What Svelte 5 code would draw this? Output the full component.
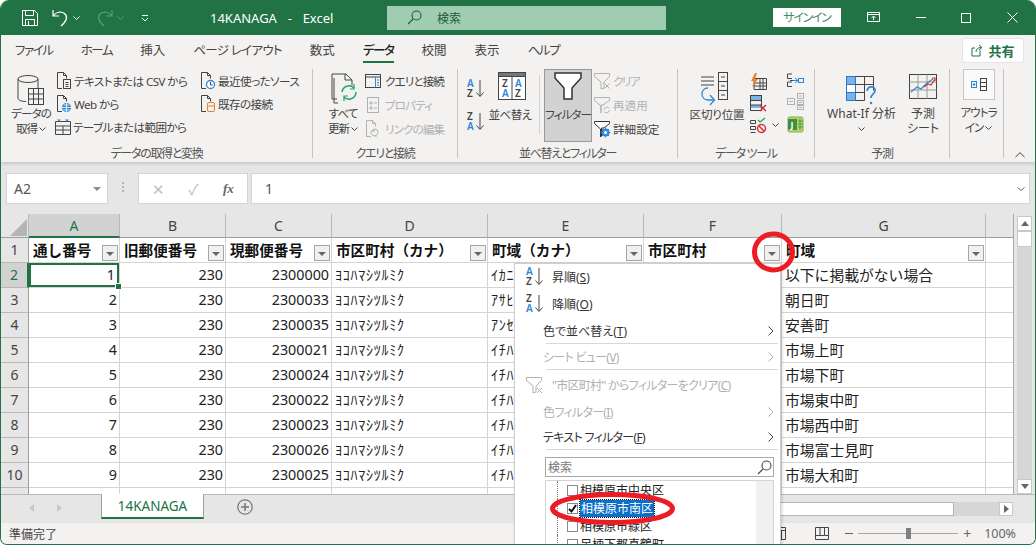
<script>
  const tabs = ['ファイル', 'ホーム', '挿入', 'ページ レイアウト', '数式', 'データ', '校閲', '表示', 'ヘルプ'];
  const cols = ['A', 'B', 'C', 'D', 'E', 'F', 'G', ''];
  const heads = ['通し番号', '旧郵便番号', '現郵便番号', '市区町村（カナ）', '町域（カナ）', '市区町村', '町域'];
  const kanji = ['挿入', '数式', '校閲', '表示'];
  const rows = [
    [2300000, 'ｲｶﾆｹｲｻｲｶﾞﾅｲﾊﾞｱｲ', '以下に掲載がない場合'],
    [2300033, 'ｱｻﾋﾁｮｳ', '朝日町'],
    [2300035, 'ｱﾝｾﾞﾝﾁｮｳ', '安善町'],
    [2300021, 'ｲﾁﾊﾞｶﾐﾁｮｳ', '市場上町'],
    [2300024, 'ｲﾁﾊﾞｼﾓﾁｮｳ', '市場下町'],
    [2300022, 'ｲﾁﾊﾞﾋｶﾞｼﾅｶﾁｮｳ', '市場東中町'],
    [2300023, 'ｲﾁﾊﾞﾆｼﾅｶﾁｮｳ', '市場西中町'],
    [2300026, 'ｲﾁﾊﾞﾌｼﾞﾐﾁｮｳ', '市場富士見町'],
    [2300025, 'ｲﾁﾊﾞﾔﾏﾄﾁｮｳ', '市場大和町']
  ];
</script>

<div class="win">
  <header class="title">
    <svg class="q1" width="16" height="16" viewBox="0 0 16 16" fill="none" stroke="#fff"><path d="M.5.500h12l3 3v12H.5zM3.500.5v5h8v-5M3.500 15.500v-6h9v6M6.500 11v4"/></svg>
    <svg class="q2" width="17" height="18" viewBox="0 0 17 18" fill="none" stroke="#fff" stroke-width="1.200"><path d="M1 1v6h6M1.500 6.500C4 3 9 2 12.500 4.500 16 7.500 15 12 9 17"/></svg>
    <svg class="chev q3" width="7" height="4" viewBox="0 0 7 4" fill="none" stroke="#fff"><path d="M.5.500l3 3 3-3"/></svg>
    <svg class="q4" width="17" height="18" viewBox="0 0 17 18" fill="none" stroke="#5a9a78" stroke-width="1.200"><path d="M16 1v6h-6M15.500 6.500C13 3 8 2 4.500 4.500 1 7.500 2 12 8 17"/></svg>
    <svg class="chev q5" width="7" height="4" viewBox="0 0 7 4" fill="none" stroke="#5a9a78"><path d="M.5.500l3 3 3-3"/></svg>
    <svg class="q6" width="8" height="8" viewBox="0 0 8 8" fill="none" stroke="#fff"><path d="M1 1.500h6M1 4l3 3 3-3"/></svg>
    <span class="doc">14KANAGA&nbsp; - &nbsp;Excel</span>
    <div class="search">
      <svg width="15" height="15" viewBox="0 0 15 15" fill="none" stroke="#1c5c38" stroke-width="1.100"><circle cx="9.500" cy="5.500" r="4.500"/><path d="M6 9l-5 5"/></svg>
      <span>検索</span>
    </div>
    <div class="signin">サインイン</div>
    <div class="winbtns">
      <svg width="13" height="11" viewBox="0 0 13 11" fill="none" stroke="#fff"><path d="M.5.500h12v9H.5zM.5 2.500h12M6.500 8V4.500M4.500 6l2-2 2 2"/></svg>
      <svg width="10" height="1" viewBox="0 0 10 1"><path d="M0 .5h10" stroke="#fff"/></svg>
      <svg width="10" height="10" viewBox="0 0 10 10" fill="none" stroke="#fff"><rect x=".5" y=".5" width="9" height="9"/></svg>
      <svg width="11" height="11" viewBox="0 0 11 11" fill="none" stroke="#fff"><path d="M.5.500l10 10M10.500.500l-10 10"/></svg>
    </div>
  </header>

  <nav class="tabs">
    {#each tabs as t}
      <span class:on={t === 'データ'} class:tight={!kanji.includes(t)} class:long={t.length > 6}>{t}</span>
    {/each}
    <div class="share">
      <svg width="13" height="13" viewBox="0 0 13 13" fill="none" stroke="#217346"><path d="M9 6.500V12H1V4h3M5 8c0-3 2-4.500 5-4.500M8 1l3 2.500L8 6"/></svg>
      共有
    </div>
  </nav>

  <div class="ribbon">
    <section class="group g1">
      <div class="body">
        <div class="big w47">
          <svg class="dn" width="28" height="31" viewBox="0 0 28 31" fill="none" stroke="#444"><ellipse cx="11" cy="5" rx="10" ry="3.500"/><path d="M1 5v19c0 2 3 3.500 8 3.500M21 5v9"/><rect x="11.500" y="14.500" width="15" height="16" fill="#f3f2f1"/><path d="M11.500 20h15M11.500 25h15M16.500 14.500v16M21.500 14.500v16"/></svg>
          <p>データの<br />取得 <svg class="chev" width="7" height="4" viewBox="0 0 7 4" fill="none" stroke="#444"><path d="M.5.500l3 3 3-3"/></svg></p>
        </div>
        <div class="col c1">
          <div class="it">
            <svg width="16" height="18" viewBox="0 0 16 18" fill="none" stroke="#444"><path d="M6 16.500H1.500V.5h6l3 3v3M7.500.5v3h3"/><rect x="7.500" y="7.500" width="7" height="9"/><path d="M9.500 10.500h3M9.500 12.500h3M9.500 14.500h3"/></svg>
            テキストまたは CSV から
          </div>
          <div class="it">
            <svg width="16" height="18" viewBox="0 0 16 18" fill="none" stroke="#444"><path d="M6 16.500H1.500V.5h6l3 3v3M7.500.5v3h3"/><circle cx="10.500" cy="12.500" r="4.500" fill="#2b88d8" stroke="none"/><path d="M6 12.500h9M10.500 8v9M7.500 10h6M7.500 15h6" stroke="#fff" stroke-width=".8"/></svg>
            Web から
          </div>
          <div class="it tbl">
            <svg width="16" height="16" viewBox="0 0 16 16" fill="none" stroke="#444"><path d="M.5 2.500h15M.5 15.500h15M.5 2.500v13M15.500 2.500v13M.5 7h15M.5 11h15M8 7v8.500"/><path d="M2 .5h4L4 2.500zM10 .5h4L12 2.500z" fill="#2b88d8" stroke="none"/></svg>
            テーブルまたは範囲から
          </div>
        </div>
        <div class="col c2">
          <div class="it">
            <svg width="16" height="18" viewBox="0 0 16 18" fill="none" stroke="#444"><path d="M6 16.500H1.500V.5h6l3 3v3M7.500.5v3h3"/><circle cx="10.500" cy="12.500" r="4" fill="#fff" stroke="#2b88d8" stroke-width="1.300"/><path d="M10.500 10v3h2" stroke="#444"/></svg>
            最近使ったソース
          </div>
          <div class="it">
            <svg width="16" height="18" viewBox="0 0 16 18" fill="none" stroke="#444"><path d="M6 16.500H1.500V.5h6l3 3v3M7.500.5v3h3"/><rect x="7.500" y="7.500" width="7" height="9" rx="1.500" stroke="#e8852a" fill="#f3f2f1"/><path d="M7.500 11h7" stroke="#e8852a"/></svg>
            既存の接続
          </div>
        </div>
      </div>
      <div class="label">データの取得と変換</div>
    </section>

    <section class="group g2">
      <div class="body">
        <div class="big w42">
          <svg width="28" height="33" viewBox="0 0 28 33" fill="none" stroke="#444"><path d="M8 27H3V2h14l6 6v5M3 2"/><path d="M5 6v25h4" stroke="#444"/><path d="M16 2v6h7"/><path d="M13 20a7 7 0 0 1 12-4M27 20a7 7 0 0 1-12 5" stroke="#21a366" stroke-width="1.500"/><path d="M25 12v5h-4M15 29v-5h4" stroke="#21a366" stroke-width="1.200"/></svg>
          <p>すべて<br />更新 <svg class="chev" width="7" height="4" viewBox="0 0 7 4" fill="none" stroke="#444"><path d="M.5.500l3 3 3-3"/></svg></p>
        </div>
        <div class="col c4">
          <div class="it">
            <svg width="16" height="14" viewBox="0 0 16 14" fill="none" stroke="#444"><rect x=".5" y=".5" width="15" height="13"/><path d="M.5 3h15" /><path d="M10.500 3v10.500" stroke="#2b88d8"/><path d="M12 6h2M12 8.500h2M12 11h2" stroke="#2b88d8"/></svg>
            クエリと接続
          </div>
          <div class="it off">
            <svg width="16" height="16" viewBox="0 0 16 16" fill="none" stroke="#b1b1b1"><rect x="2.500" y=".5" width="11" height="15"/><path d="M5 5h2v2H5zM5 10h2v2H5zM9 6h3M9 11h3"/></svg>
            プロパティ
          </div>
          <div class="it off">
            <svg width="16" height="18" viewBox="0 0 16 18" fill="none" stroke="#b1b1b1"><path d="M6 16.500H1.500V.5h6l3 3v3M7.500.5v3h3M7 12a3 3 0 0 1 6 0c0 2-2 4-4 4M10 12a2 2 0 0 0-4 1c0 2 3 3 6 3"/></svg>
            リンクの編集
          </div>
        </div>
      </div>
      <div class="label">クエリと接続</div>
    </section>

    <section class="group g3">
      <div class="body">
        <div class="sorts">
          <svg width="18" height="21" viewBox="0 0 18 21"><text x="0" y="9" class="az blue">A</text><text x="0" y="19" class="az">Z</text><path d="M13 2v16M9.500 14.500L13 18.500l3.500-4" fill="none" stroke="#444"/></svg>
          <svg width="18" height="21" viewBox="0 0 18 21"><text x="0" y="9" class="az">Z</text><text x="0" y="19" class="az blue">A</text><path d="M13 2v16M9.500 14.500L13 18.500l3.500-4" fill="none" stroke="#444"/></svg>
        </div>
        <div class="big w46">
          <svg width="28" height="28" viewBox="0 0 28 28" fill="none" stroke="#444"><rect x=".5" y=".5" width="27" height="27" fill="#fff"/><rect x=".5" y=".5" width="27" height="4" fill="#777"/><path d="M14 4.500v23"/><text x="4" y="15" class="az">Z</text><text x="4" y="25" class="az blue">A</text><text x="17" y="15" class="az blue">A</text><text x="17" y="25" class="az">Z</text></svg>
          <p class="up">並べ替え</p>
        </div>
        <i class="vline"></i>
        <div class="big w48 pressed">
          <svg width="28" height="28" viewBox="0 0 28 28"><path d="M1 1h26v5l-9 10v11h-8V16L1 6z" fill="#fff" stroke="#333" stroke-width="1.500"/></svg>
          <p class="up">フィルター</p>
        </div>
        <div class="col c3">
          <div class="it off">
            <svg width="17" height="17" viewBox="0 0 17 17" fill="none" stroke="#b1b1b1"><path d="M.5.500h15v3L10 9v6l-3 1V9L.5 3.500zM10.500 10.500l5 5M15.500 10.500l-5 5"/></svg>
            <span class="kk">クリア</span>
          </div>
          <div class="it off">
            <svg width="17" height="17" viewBox="0 0 17 17" fill="none" stroke="#b1b1b1"><path d="M.5.500h15v3L10 7v1H7v8L7 9 .5 3.500zM10 13a3 3 0 0 1 5-2M15.500 13a3 3 0 0 1-5 2"/></svg>
            再適用
          </div>
          <div class="it">
            <svg width="17" height="17" viewBox="0 0 17 17"><path d="M.5.500h15v2L10 7H7.500v8l-1 1V8L.5 2.500z" fill="#fff" stroke="#333"/><circle cx="11.500" cy="11.500" r="3" fill="none" stroke="#2b88d8" stroke-width="2"/><path d="M11.500 6.500v10M6.500 11.500h10M8 8l7 7M15 8l-7 7" stroke="#2b88d8" stroke-width="1"/><circle cx="11.500" cy="11.500" r="1.500" fill="#fff"/></svg>
            詳細設定
          </div>
        </div>
      </div>
      <div class="label">並べ替えとフィルター</div>
    </section>

    <section class="group g4">
      <div class="body">
        <div class="big w58">
          <svg width="34" height="33" viewBox="0 0 34 33" fill="none" stroke="#444"><path d="M1 5h13M1 9h13M1 13h13"/><rect x="18.500" y=".5" width="9" height="27"/><path d="M18.500 9.500h9M18.500 18.500h9M21 5h4M21 14h4M21 23h4"/><path d="M14 28H8c-8 0-8-12 0-12" stroke="#2b88d8" stroke-width="1.300"/><path d="M10 23l4.500 5-4.500 5" stroke="#2b88d8" stroke-width="1.300"/></svg>
          <p class="up">区切り位置</p>
        </div>
        <div class="tools">
          <svg width="17" height="17" viewBox="0 0 17 17" fill="none" stroke="#444"><path d="M4 5.500h12.500v11H4zM4 10h12.500M4 13h12.500M10 5.500v11M13 5.500v11"/><path d="M5 0L1 8h3l-2 6 6-8H5l2-6z" fill="#e8852a" stroke="none"/></svg>
          <svg width="17" height="17" viewBox="0 0 17 17" fill="none" stroke="#444"><rect x=".5" y=".5" width="11" height="15"/><rect x="1" y="1" width="10" height="4.500" fill="#77b5e8" stroke="none"/><rect x="1" y="10" width="10" height="3" fill="#77b5e8" stroke="none"/><path d="M.5 5.500h11M.5 10h11"/><path d="M10 10l6 6M16 10l-6 6" stroke="#d13438" stroke-width="1.400"/></svg>
          <svg width="17" height="17" viewBox="0 0 17 17" fill="none" stroke="#444"><path d="M.5 3.500h5v3h-5zM.5 9.500h5v3h-5zM.5 15.500h5"/><path d="M8 3l2 2 5-4" stroke="#21a366" stroke-width="1.300"/><circle cx="11.500" cy="11.500" r="4" stroke="#d13438" stroke-width="1.500"/><path d="M8.500 8.500l6 6" stroke="#d13438" stroke-width="1.500"/></svg>
        </div>
        <svg class="chev t4" width="7" height="4" viewBox="0 0 7 4" fill="none" stroke="#444"><path d="M.5.500l3 3 3-3"/></svg>
        <div class="tools t5">
          <svg width="17" height="15" viewBox="0 0 17 15" fill="none" stroke="#444"><path d="M5 1H.5v4.500H5M5 9H.5v4.500H5M3 7.500h6"/><path d="M6 7.500l5 0M8 5l3 2.500L8 10" stroke="#2b88d8"/><rect x="11.500" y="5.500" width="5" height="4" stroke="#2b88d8"/></svg>
          <svg width="17" height="17" viewBox="0 0 17 17" fill="none" stroke="#b1b1b1"><rect x=".5" y="5.500" width="7" height="6"/><rect x="10.500" y=".5" width="6" height="5"/><rect x="10.500" y="7.500" width="6" height="4"/><rect x="10.500" y="12.500" width="6" height="4"/><path d="M2 8.500h4M12 3h3M12 9.500h3M12 14.500h3"/></svg>
          <svg width="17" height="17" viewBox="0 0 17 17"><rect x="1" y="1" width="15" height="15" rx="1.500" fill="#b5d56a" stroke="#8cae43"/><rect x="1" y="3" width="9" height="11" fill="#3e8e41"/><text x="3.500" y="12" class="pp">J</text><path d="M11 5h5M11 8h5M11 11h5M13 3v11" stroke="#3e8e41" stroke-width=".8"/></svg>
        </div>
      </div>
      <div class="label">データ ツール</div>
    </section>

    <section class="group g5">
      <div class="body">
        <div class="big w73">
          <svg class="wi" width="32" height="29" viewBox="0 0 32 29" fill="none" stroke="#444"><rect x=".5" y=".5" width="9" height="8" fill="#77b5e8" stroke="#2b78c8"/><rect x=".5" y="8.500" width="9" height="8" fill="#fff" stroke="#2b78c8"/><rect x=".5" y="16.500" width="9" height="8" fill="#77b5e8" stroke="#2b78c8"/><path d="M9.500.5h18v14M9.500 8.500h18M18.500.5v24M9.500 16.500h9M9.500 24.500h9"/><path d="M21 15c1-6 9-5 8 0 0 3-4 3-4 7" stroke="#2b88d8" stroke-width="1.700"/><circle cx="25" cy="27" r="1.200" fill="#2b88d8" stroke="none"/></svg>
          <p>What-If 分析<br /><svg class="chev" width="7" height="4" viewBox="0 0 7 4" fill="none" stroke="#444"><path d="M.5.500l3 3 3-3"/></svg></p>
        </div>
        <div class="big w36">
          <svg class="dn" width="28" height="26" viewBox="0 0 28 26" fill="none" stroke="#444"><rect x=".5" y=".5" width="27" height="24"/><path d="M.5 8h27M.5 16h27M9 .5v24M18 .5v24" stroke="#999"/><path d="M2 18l6-5 4 2 6-6 6-4" stroke="#2b88d8" stroke-width="1.200"/><path d="M15 13l4-3 3 1 4-6M23 4h3v3" stroke="#d13438" stroke-width="1.200"/></svg>
          <p>予測<br />シート</p>
        </div>
      </div>
      <div class="label">予測</div>
    </section>

    <section class="group g6">
      <div class="body">
        <div class="big w34">
          <div class="outline">
            <svg width="16" height="13" viewBox="0 0 16 13" fill="none" stroke="#444"><rect x=".5" y="3.500" width="5" height="6" stroke="#2b88d8"/><path d="M1.500 6.500h3M3 5v3" stroke="#2b88d8"/><rect x="9.500" y=".5" width="6" height="12"/><path d="M9.500 4.500h6M9.500 8.500h6"/></svg>
          </div>
          <p class="ou">アウトラ<br />イン <svg class="chev" width="7" height="4" viewBox="0 0 7 4" fill="none" stroke="#444"><path d="M.5.500l3 3 3-3"/></svg></p>
        </div>
      </div>
      <div class="label"></div>
    </section>
    <svg class="collapse" width="10" height="6" viewBox="0 0 10 6" fill="none" stroke="#444"><path d="M.5 5L5 .7 9.500 5"/></svg>
  </div>

  <div class="fbar">
    <div class="namebox">A2<svg width="8" height="4" viewBox="0 0 8 4"><path d="M0 0h8L4 4z" fill="#8a8a8a"/></svg></div>
    <div class="grip"><i></i><i></i><i></i></div>
    <div class="fbtns">
      <span class="x">✕</span><span class="x">✓</span><span class="fx">fx</span>
    </div>
    <div class="finput">1<svg width="8" height="4" viewBox="0 0 8 4" fill="none" stroke="#666"><path d="M.5.500L4 3.500 7.500.500"/></svg></div>
  </div>

  <div class="main">
    <div class="sheet">
      <div class="corner"><svg width="17" height="17" viewBox="0 0 17 17"><path d="M17 0v17H0z" fill="#b4b4b4"/></svg></div>
      {#each cols as c, i}
        <div class="ch" class:act={i === 0}>{c}</div>
      {/each}

      <div class="rh">1</div>
      {#each heads as h}
        <div class="c hd">
          <span>{h}</span>
          <i class="fbtn"></i>
        </div>
      {/each}
      <div class="c"></div>

      {#each rows as r, i}
        <div class="rh" class:act={i === 0}>{i + 2}</div>
        <div class="c num" class:sel={i === 0}>{i + 1}</div>
        <div class="c num">230</div>
        <div class="c num">{r[0]}</div>
        <div class="c kana">ﾖｺﾊﾏｼﾂﾙﾐｸ</div>
        <div class="c kana">{r[1]}</div>
        <div class="c"></div>
        <div class="c txt">{r[2]}</div>
        <div class="c"></div>
      {/each}

      <div class="rh"></div>
      {#each cols as c}
        <div class="c"></div>
      {/each}
    </div>
    <div class="vscroll">
      <div class="sbtn"><svg width="8" height="5" viewBox="0 0 8 5"><path d="M4 0l4 5H0z" fill="#666"/></svg></div>
      <div class="thumb"></div>
      <div class="track"></div>
      <div class="sbtn"><svg width="8" height="5" viewBox="0 0 8 5"><path d="M4 5l4-5H0z" fill="#666"/></svg></div>
    </div>
  </div>

  <div class="sheets">
    <div class="nav">
      <svg width="5" height="8" viewBox="0 0 5 8"><path d="M5 0v8L0 4z" fill="#c8c8c8"/></svg>
      <svg width="5" height="8" viewBox="0 0 5 8"><path d="M0 0v8l5-4z" fill="#c8c8c8"/></svg>
    </div>
    <div class="stab">14KANAGA</div>
    <svg class="plus" width="16" height="16" viewBox="0 0 16 16" fill="none" stroke="#777"><circle cx="8" cy="8" r="7.200" stroke-width="1.200"/><path d="M4 8h8M8 4v8" stroke-width="1.500"/></svg>
    <div class="hscroll">
      <div class="hthumb"></div>
      <div class="sbtn h"><svg width="5" height="8" viewBox="0 0 5 8"><path d="M0 0v8l5-4z" fill="#666"/></svg></div>
    </div>
  </div>

  <footer class="status">
    <span>準備完了</span>
    <div class="zoombar">
      <svg class="view vfirst" width="14" height="13" viewBox="0 0 14 13" fill="none" stroke="#444"><path d="M.5.500h13v12H.5zM.5 3.500h13M4.500 3.500v9M9.500 3.500v9"/></svg>
      <svg class="view" width="14" height="13" viewBox="0 0 14 13" fill="none" stroke="#444"><path d="M.5.500h13v12H.5zM5 .5v8H.5M9.500 .5v8h4M5 8.500h4.500"/></svg>
      <i class="minus"></i>
      <div class="slider"><b></b></div>
      <span class="plusz">+</span>
      <span class="pct">100%</span>
    </div>
  </footer>

  <div class="menu">
    <div class="mi ic first">
      <svg width="19" height="21" viewBox="0 0 19 21"><text x="0" y="9" class="az blue">A</text><text x="0" y="19" class="az">Z</text><path d="M13 2v16M9.500 14.500L13 18.500l3.500-4" fill="none" stroke="#444"/></svg>
      <span>昇順(<u>S</u>)</span>
    </div>
    <div class="mi ic">
      <svg width="19" height="21" viewBox="0 0 19 21"><text x="0" y="9" class="az">Z</text><text x="0" y="19" class="az blue">A</text><path d="M13 2v16M9.500 14.500L13 18.500l3.500-4" fill="none" stroke="#444"/></svg>
      <span>降順(<u>O</u>)</span>
    </div>
    <div class="mi s2"><span>色で並べ替え(<u>T</u>)</span><svg class="gt" width="6" height="10" viewBox="0 0 6 10" fill="none" stroke="#444"><path d="M.5.500L5 5 .5 9.500"/></svg></div>
    <hr />
    <div class="mi s3 dis"><span class="k">シート ビュー(<u>V</u>)</span><svg class="gt" width="6" height="10" viewBox="0 0 6 10" fill="none" stroke="#b1b1b1"><path d="M.5.500L5 5 .5 9.500"/></svg></div>
    <hr />
    <div class="mi clr dis">
      <svg width="17" height="17" viewBox="0 0 17 17" fill="none" stroke="#b1b1b1"><path d="M.5.500h15v3L10 9v6l-3 1V9L.5 3.500zM11 11l5 5M16 11l-5 5"/></svg>
      <span class="k">"市区町村" からフィルターをクリア(<u>C</u>)</span>
    </div>
    <div class="mi s3 dis"><span class="k">色フィルター(<u>I</u>)</span><svg class="gt" width="6" height="10" viewBox="0 0 6 10" fill="none" stroke="#b1b1b1"><path d="M.5.500L5 5 .5 9.500"/></svg></div>
    <div class="mi s3"><span class="k">テキスト フィルター(<u>F</u>)</span><svg class="gt" width="6" height="10" viewBox="0 0 6 10" fill="none" stroke="#444"><path d="M.5.500L5 5 .5 9.500"/></svg></div>
    <hr />
    <div class="msearch">
      <span>検索</span>
      <svg width="15" height="15" viewBox="0 0 15 15" fill="none" stroke="#444" stroke-width="1.100"><circle cx="9.500" cy="5.500" r="4.500"/><path d="M6 9l-5 5"/></svg>
    </div>
    <div class="list">
      <div class="li"><i class="box"></i><span>相模原市中央区</span></div>
      <div class="li hit"><i class="box"><svg width="9" height="9" viewBox="0 0 9 9" fill="none" stroke="#111" stroke-width="2"><path d="M1 5l2.500 2.500L8 1"/></svg></i><span>相模原市南区</span></div>
      <div class="li"><i class="box"></i><span>相模原市緑区</span></div>
      <div class="li"><i class="box"></i><span>足柄下郡真鶴町</span></div>
    </div>
  </div>

  <svg class="marks" width="1036" height="545" viewBox="0 0 1036 545" fill="none" stroke="#ed1c24" stroke-width="5">
    <ellipse cx="773.500" cy="252" rx="19" ry="18"/>
    <ellipse cx="612.500" cy="508.500" rx="60" ry="14"/>
  </svg>
</div>

<style>
:global(body) {
  background: #fff;
}

.win {
  position: relative;
  box-sizing: border-box;
  width: 1036px;
  height: 545px;
  overflow: hidden;
  display: flex;
  flex-direction: column;
  background: #e6e6e6;
  border-left: 1px solid #217346;
  border-right: 1px solid #217346;
  border-bottom: 1px solid #217346;
  border-radius: 9px 9px 7px 7px;
  font-family: "Noto Sans", "Noto Sans CJK JP", sans-serif;
  font-size: 12px;
  font-feature-settings: "palt";
  color: #444;
}

svg {
  display: block;
  flex: none;
  overflow: visible;
}

p {
  margin: 0;
}

.title {
  height: 35px;
  flex: none;
  margin: 0 -1px;
  background: #217346;
  display: flex;
  align-items: center;
  color: #fff;
}

.q1 { margin-left: 22px; }
.q2 { margin-left: 14px; }
.q3 { margin-left: 4px; }
.q4 { margin-left: 16px; }
.q5 { margin-left: 4px; }
.q6 { margin-left: 17px; }

.doc {
  margin-left: 61px;
  width: 177px;
  font-size: 13px;
  word-spacing: 2px;
  white-space: nowrap;
}

.search {
  width: 279px;
  height: 24px;
  background: #a0cdb1;
  color: #1c5c38;
  display: flex;
  align-items: center;
  font-size: 12px;
}

.search svg {
  margin-left: 20px;
  margin-right: 15px;
}

.signin {
  margin-left: 107px;
  width: 68px;
  height: 19px;
  background: #fff;
  color: #3f8a62;
  text-align: center;
  line-height: 19px;
  font-size: 12px;
  letter-spacing: -1.300px;
}

.winbtns {
  margin-left: 26px;
  display: flex;
  align-items: center;
  gap: 35.600px;
}

.tabs {
  height: 31px;
  flex: none;
  background: #f3f2f1;
  display: flex;
  align-items: center;
  gap: 28px;
  padding-left: 14px;
  font-size: 12.500px;
  position: relative;
}

.tabs span {
  line-height: 20px;
  height: 20px;
  white-space: nowrap;
  color: #444;
}

.tabs span.tight {
  letter-spacing: -1.400px;
}

.tabs span.long {
  letter-spacing: -0.700px;
}

.tabs span.on {
  color: #222;
  font-weight: 500;
  box-shadow: 0 2px 0 #217346;
}

.share {
  margin-left: auto;
  margin-right: 12px;
  width: 60px;
  height: 23px;
  background: #fff;
  border-radius: 2px;
  box-shadow: 0 0 0 1px #e4e4e4;
  color: #217346;
  font-weight: 700;
  font-size: 13px;
  display: flex;
  align-items: center;
  justify-content: center;
  gap: 4px;
}

.ribbon {
  height: 96px;
  flex: none;
  background: #f3f2f1;
  box-shadow: 0 2px 3px rgba(0, 0, 0, 0.14);
  display: flex;
  padding-top: 3px;
  box-sizing: border-box;
  position: relative;
  z-index: 1;
  font-size: 11.600px;
}

.group {
  display: flex;
  flex-direction: column;
  height: 89px;
  flex: none;
  box-sizing: border-box;
  border-right: 1px solid #c4c4c4;
}

.g1 { width: 312px; }
.g2 { width: 145px; }
.g3 { width: 220px; }
.g4 { width: 137px; }
.g5 { width: 135px; }
.g6 { width: 54px; }

.body {
  height: 75px;
  display: flex;
}

.label {
  height: 14px;
  line-height: 19px;
  text-align: center;
  font-size: 12px;
  letter-spacing: -1.300px;
  color: #555;
  white-space: nowrap;
}

.g1 .body { padding-left: 6px; }
.g2 .body { padding-left: 9px; }
.g3 .body { padding-left: 9px; }
.g4 .body { padding-left: 10px; }
.g5 .body { padding-left: 10px; gap: 7px; }
.g6 .body { padding-left: 12px; }

.big {
  display: flex;
  flex-direction: column;
  align-items: center;
  padding-top: 3px;
  box-sizing: border-box;
  text-align: center;
  line-height: 14.500px;
  white-space: nowrap;
  letter-spacing: -1px;
}

.dn {
  margin-top: 2px;
}

.wi {
  margin-top: 4px;
}

.big p {
  margin-top: auto;
  padding-bottom: 8px;
  height: 29px;
}

.big p.up {
  padding-bottom: 22px;
  height: 14px;
}

.big p svg {
  display: inline-block;
  vertical-align: 2px;
}

.big p.ou {
  margin-top: auto;
  padding-bottom: 9px;
  height: 29px;
}

.w47 { width: 48px; }
.w42 { width: 42px; }
.w46 { width: 46px; }
.w46 p { margin-left: -4px; letter-spacing: -0.600px; }
.w48 { width: 48px; }
.w58 { width: 58px; letter-spacing: -0.200px; }
.w73 { width: 73px; letter-spacing: 0; font-size: 12px; }
.w36 { width: 36px; letter-spacing: 0; font-size: 12px; }
.w34 { width: 33px; }

.pressed {
  background: #d2d2d2;
  box-shadow: inset 0 0 0 1px #999;
  height: 73px;
}

.pressed p.up {
  padding-bottom: 20px;
}

.vline {
  width: 1px;
  height: 59px;
  margin: 6px 4px 0 4px;
  background: #d2d2d2;
}

.col {
  display: flex;
  flex-direction: column;
  white-space: nowrap;
}

.c1 {
  margin-left: 1px;
  width: 144px;
}

.c1,
.c2 {
  letter-spacing: -0.600px;
}

.c3 { margin-left: 2px; }

.kk {
  letter-spacing: -1.500px;
}

.c4 {
  padding-left: 1px;
  letter-spacing: -0.900px;
}

.c4 .it {
  gap: 4px;
}

.it {
  height: 24px;
  display: flex;
  align-items: center;
  gap: 2px;
}

.c1 .it,
.c2 .it {
  height: 23px;
}

.tbl svg { margin-left: -1px; }

.off {
  color: #b1b1b1;
}

.sorts {
  display: flex;
  flex-direction: column;
  gap: 12px;
  padding-top: 9px;
  width: 22px;
}

.az {
  font-family: "Noto Sans", sans-serif;
  font-size: 10px;
  font-weight: 600;
  fill: #444;
  stroke: none;
}

.az.blue {
  fill: #2b88d8;
}

.pp {
  font-family: "Noto Sans", sans-serif;
  font-size: 9px;
  font-weight: 700;
  fill: #fff;
}

.tools {
  margin-left: 4px;
  padding-top: 1px;
  display: flex;
  flex-direction: column;
  height: 66px;
  justify-content: space-around;
}

.t4 {
  margin: 54px 0 0 5px;
}

.tools.t5 {
  margin-left: 8px;
}

.outline {
  width: 32px;
  height: 31px;
  box-sizing: border-box;
  border: 1px solid #c6c6c6;
  background: #fafafa;
  display: flex;
  align-items: center;
  justify-content: center;
  margin-top: -3px;
}

.collapse {
  position: absolute;
  right: 10px;
  bottom: 4px;
}

.fbar {
  height: 52px;
  flex: none;
  box-sizing: border-box;
  padding: 11px 5px 0 5px;
  display: flex;
  align-items: flex-start;
  font-size: 14px;
  background: #e6e6e6;
}

.namebox,
.fbtns,
.finput {
  height: 31px;
  box-sizing: border-box;
  background: #fff;
  border: 1px solid #d4d4d4;
  display: flex;
  align-items: center;
}

.namebox {
  width: 102px;
  padding: 0 6px 0 7px;
  justify-content: space-between;
  color: #555;
}

.grip {
  width: 30px;
  display: flex;
  flex-direction: column;
  align-items: center;
  gap: 2px;
  padding-top: 9px;
}

.grip i {
  width: 2px;
  height: 2px;
  background: #b4b4b4;
}

.fbtns {
  width: 110px;
  padding-left: 11px;
  gap: 18px;
}

.x {
  width: 17px;
  font-size: 15px;
  color: #c0c0c0;
  text-align: center;
}

.fx {
  margin-left: 3px;
  font-family: "Liberation Serif", serif;
  font-style: italic;
  font-weight: 700;
  font-size: 13px;
  color: #666;
}

.finput {
  margin-left: 3px;
  flex: 1;
  padding: 0 4px 0 13px;
  justify-content: space-between;
  color: #555;
}

.main {
  height: 280px;
  flex: none;
  display: flex;
}

.sheet {
  width: 1013px;
  height: 280px;
  overflow: hidden;
  display: grid;
  grid-template-columns: 28px 91px 106px 106px 156px 156px 138px 204px 28px;
  grid-template-rows: 24px repeat(11, 25px);
  background: #fff;
  border-right: 1px solid #a8a8a8;
  box-sizing: border-box;
  font-size: 14.500px;
  font-feature-settings: normal;
  color: #222;
}

.corner {
  background: #e6e6e6;
  border-right: 1px solid #b8b8b8;
  border-bottom: 1px solid #9e9e9e;
  box-sizing: border-box;
  padding: 5px 0 0 9px;
}

.ch {
  background: #e6e6e6;
  border-right: 1px solid #b8b8b8;
  border-bottom: 1px solid #9e9e9e;
  box-sizing: border-box;
  text-align: center;
  line-height: 24px;
  font-size: 14px;
  color: #444;
  font-family: "Noto Sans", sans-serif;
}

.ch.act {
  background: #d2d2d2;
  color: #217346;
  border-bottom: 2px solid #217346;
}

.rh {
  background: #e6e6e6;
  border-right: 1px solid #9e9e9e;
  border-bottom: 1px solid #b8b8b8;
  box-sizing: border-box;
  text-align: center;
  line-height: 24px;
  font-size: 14px;
  color: #444;
  font-family: "Noto Sans", sans-serif;
}

.rh.act {
  background: #d2d2d2;
  color: #217346;
  border-right: 2px solid #217346;
}

.c {
  border-right: 1px solid #d4d4d4;
  border-bottom: 1px solid #d4d4d4;
  box-sizing: border-box;
  min-width: 0;
  overflow: hidden;
  white-space: nowrap;
  line-height: 24px;
}

.hd {
  font-weight: 700;
  font-size: 14.600px;
  display: flex;
  justify-content: space-between;
  padding: 0 1px 1px 4px;
  align-items: flex-end;
  color: #111;
}

.hd span {
  align-self: flex-start;
}

.fbtn {
  width: 16px;
  height: 16px;
  flex: none;
  box-sizing: border-box;
  background: #f0f0f0;
  border: 1px solid #a6a6a6;
  position: relative;
}

.fbtn::after {
  content: "";
  position: absolute;
  left: 3px;
  top: 6px;
  border: 4px solid transparent;
  border-top: 4px solid #666;
  border-bottom: 0;
}

.num {
  text-align: right;
  padding-right: 2px;
  font-size: 14.300px;
}

.kana {
  padding-left: 3px;
  font-size: 14px;
  letter-spacing: 0.750px;
}

.txt {
  padding-left: 3px;
  font-size: 14.800px;
}

.c.sel {
  overflow: visible;
  position: relative;
  box-shadow: inset 0 0 0 2px #217346;
  padding-right: 4px;
}

.sel::after {
  content: "";
  position: absolute;
  right: -3px;
  bottom: -3px;
  width: 5px;
  height: 5px;
  background: #217346;
  border: 1px solid #fff;
  z-index: 1;
}

.vscroll {
  width: 15px;
  margin: 2px 0 0 3px;
  height: 278px;
  display: flex;
  flex-direction: column;
  background: #d6d6d6;
}

.sbtn {
  height: 15px;
  flex: none;
  box-sizing: border-box;
  background: #fff;
  border: 1px solid #c8c8c8;
  display: flex;
  align-items: center;
  justify-content: center;
}

.thumb {
  height: 16px;
  background: #fff;
  border: 1px solid #c8c8c8;
  box-sizing: border-box;
}

.track {
  flex: 1;
}

.sheets {
  height: 29px;
  flex: none;
  display: flex;
  align-items: flex-start;
  background: #e6e6e6;
  border-top: 1px solid #b8b8b8;
  box-sizing: border-box;
}

.nav {
  width: 100px;
  height: 26px;
  display: flex;
  align-items: center;
  gap: 23px;
  padding-left: 28px;
  box-sizing: border-box;
}

.stab {
  width: 103px;
  height: 25px;
  margin-top: -1px;
  box-sizing: border-box;
  background: #fff;
  color: #217346;
  border-left: 1px solid #a0a0a0;
  border-right: 1px solid #a0a0a0;
  border-bottom: 2px solid #217346;
  text-align: center;
  line-height: 24px;
  font-size: 13.500px;
}

.plus {
  margin: 4px 0 0 33px;
}

.hscroll {
  margin-left: 527px;
  width: 233px;
  height: 14px;
  margin-top: 7px;
  background: #d6d6d6;
  display: flex;
  justify-content: space-between;
}

.hthumb {
  width: 174px;
  height: 14px;
  background: #fff;
  border: 1px solid #b4b4b4;
  box-sizing: border-box;
}

.sbtn.h {
  width: 14px;
  height: 14px;
}

.status {
  flex: 1;
  background: #f3f2f1;
  display: flex;
  align-items: center;
  padding-left: 8px;
  font-size: 12px;
}

.zoombar {
  margin-left: auto;
  display: flex;
  align-items: center;
  padding-right: 19px;
  color: #666;
}

.view {
  margin-right: 16px;
}

.vfirst {
  margin-right: 29px;
}

.minus {
  width: 8px;
  height: 1px;
  background: #666;
}

.slider {
  width: 100px;
  height: 1px;
  margin: 0 5px 0 5px;
  background: #a6a6a6;
  position: relative;
}

.slider b {
  position: absolute;
  left: 48px;
  top: -5px;
  width: 5px;
  height: 11px;
  background: #808080;
}

.plusz {
  font-size: 14px;
  margin-right: 13px;
}

.pct {
  font-size: 12.500px;
}

.menu {
  position: absolute;
  left: 513px;
  top: 263px;
  width: 267px;
  height: 300px;
  box-sizing: border-box;
  background: #fff;
  border: 1px solid #cfcfcf;
  box-shadow: 1px 1px 3px rgba(0, 0, 0, 0.18);
  z-index: 2;
  display: flex;
  flex-direction: column;
  color: #333;
}

.mi {
  display: flex;
  align-items: center;
  white-space: nowrap;
  padding-left: 28px;
  position: relative;
  flex: none;
}

.k {
  letter-spacing: -0.700px;
}

.ic {
  height: 27px;
  padding-left: 11px;
  gap: 7px;
}

.first {
  margin-top: -1px;
}

.s2 {
  height: 25px;
  margin-top: 1px;
}

.s3 {
  height: 25px;
}

.gt {
  position: absolute;
  right: 6px;
  top: 8px;
}

.dis {
  color: #b1b1b1;
}

.clr {
  height: 29px;
  padding: 1px 0 0 11px;
  box-sizing: border-box;
  gap: 9px;
}

hr {
  border: 0;
  margin: 0 2px 0 31px;
  height: 1px;
  background: #d8d8d8;
  flex: none;
}

.msearch {
  margin: 7px 6px 0 30px;
  height: 20px;
  flex: none;
  box-sizing: border-box;
  border: 1px solid #a8a8a8;
  display: flex;
  align-items: center;
  justify-content: space-between;
  padding: 0 1px 0 2px;
  color: #777;
}

.list {
  margin: 3px 6px 0 30px;
  flex: 1;
  border: 1px solid #d4d4d4;
  background: linear-gradient(to right, #fff 210px, #f0f0f0 210px);
}

.li {
  height: 18px;
  display: flex;
  align-items: center;
  padding-left: 21px;
  gap: 2px;
  position: relative;
  color: #222;
}

.li::before {
  content: "";
  position: absolute;
  left: 11px;
  top: 0;
  bottom: 0;
  border-left: 1px dotted #777;
}

.box {
  width: 11px;
  height: 11px;
  flex: none;
  box-sizing: border-box;
  background: #fff;
  border: 1px solid #8a8a8a;
  display: flex;
  align-items: center;
  justify-content: center;
}

.hit span {
  background: #0a6fc9;
  color: #fff;
  outline: 1px dotted #111;
  line-height: 17px;
  padding: 0 1px;
}

.marks {
  position: absolute;
  left: -1px;
  top: 0;
  z-index: 3;
  pointer-events: none;
}
</style>
